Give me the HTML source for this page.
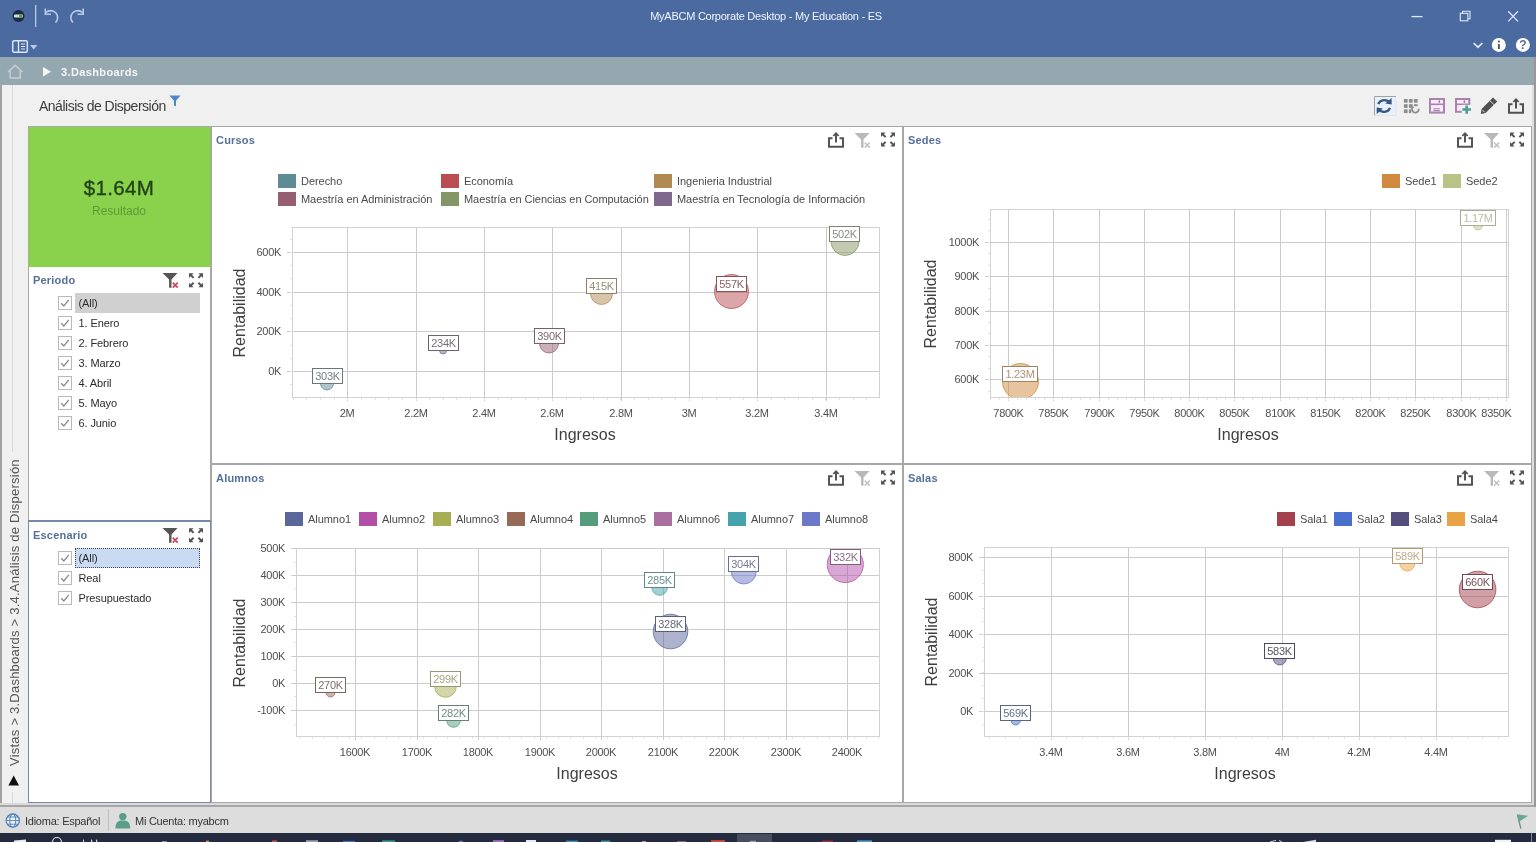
<!DOCTYPE html>
<html><head><meta charset="utf-8"><title>MyABCM Corporate Desktop - My Education - ES</title>
<style>
html,body{margin:0;padding:0;}
body{width:1536px;height:842px;overflow:hidden;background:#f0f0f0;font-family:"Liberation Sans",sans-serif;position:relative;}
.abs{position:absolute;}
#wrap{position:absolute;left:0;top:0;width:1536px;height:842px;will-change:transform;}
#titlebar{left:0;top:0;width:1536px;height:57px;background:#4b6a9f;}
#title{left:-2px;top:10px;width:1536px;text-align:center;color:#f2f5fa;font-size:11px;letter-spacing:-0.25px;}
#crumb{left:0;top:57px;width:1536px;height:28px;background:#96a8af;}
#crumbtxt{left:61px;top:66px;color:#f4f7f8;font-size:11px;font-weight:bold;letter-spacing:0.38px;}
#leftedge{left:0;top:85px;width:2px;height:721px;background:#a0a0a0;}
#leftstrip{left:2px;top:85px;width:25px;height:721px;background:#f0f0f0;}
#stripline{left:12px;top:85px;width:1px;height:721px;background:#d9d9d9;}
#heading{left:39px;top:98px;font-size:14px;color:#3c3c3c;letter-spacing:-0.5px;}
#sidetxt{left:7px;top:766px;font-size:13px;color:#555;transform-origin:0 0;transform:rotate(-90deg);white-space:nowrap;letter-spacing:0.23px;}
#green{left:28px;top:127px;width:182px;height:140px;background:#8ad24b;}
#val{left:28px;top:175.5px;width:182px;text-align:center;font-size:20.5px;color:#1f3f18;letter-spacing:0.35px;-webkit-text-stroke:0.35px #1f3f18;}
#res{left:28px;top:204px;width:182px;text-align:center;font-size:12px;color:#5f9a3a;}
.panel{background:#fff;}
.ptitle{font-size:11px;font-weight:bold;color:#54709b;letter-spacing:0.2px;}
.row{font-size:11px;color:#2b2b2b;letter-spacing:-0.1px;}
.cb{width:12px;height:12px;border:1px solid #b4b4b4;background:#fff;box-sizing:content-box;}
#status{left:0;top:807px;width:1536px;height:26px;background:#dddddd;}
#taskbar{left:0;top:833px;width:1536px;height:9px;background:#242b3f;}
.st{font-size:11px;color:#333;letter-spacing:-0.25px;}
svg text{font-family:"Liberation Sans",sans-serif;}
.ax{font-size:11px;fill:#4f4f4f;letter-spacing:-0.3px;}
.ttl{font-size:16px;fill:#3f3f3f;letter-spacing:0px;}
.lg{font-size:11px;fill:#4a4a4a;letter-spacing:-0.05px;}
.bl{font-size:11px;letter-spacing:-0.3px;}
</style></head><body>
<div id="wrap">

<div class="abs" id="titlebar"></div>
<div class="abs" id="title">MyABCM Corporate Desktop - My Education - ES</div>
<div class="abs" id="crumb"></div>
<div class="abs" id="crumbtxt">3.Dashboards</div>

<div class="abs" id="leftedge"></div>
<div class="abs" id="leftstrip"></div>
<div class="abs" id="stripline"></div>
<div class="abs" style="left:10px;top:452px;width:6px;height:340px;background:#f0f0f0;"></div>
<div class="abs" id="sidetxt">Vistas &gt; 3.Dashboards &gt; 3.4.Análisis de Dispersión</div>
<div class="abs" id="heading">Análisis de Dispersión</div>

<!-- panel frames -->
<div class="abs" style="left:28px;top:126px;width:1504px;height:677px;background:#a8a8a8;"></div>
<div class="abs" style="left:0;top:803px;width:1536px;height:2px;background:#dadada;"></div>
<div class="abs" style="left:0;top:805px;width:1536px;height:2px;background:#a6a6a6;"></div>
<div class="abs" style="left:1532px;top:85px;width:2px;height:720px;background:#dcdcdc;"></div>
<div class="abs" style="left:1534px;top:57px;width:2px;height:750px;background:#989898;"></div>
<div class="abs" id="green"></div>
<div class="abs" style="left:28px;top:127px;width:1px;height:140px;background:#9cba88;"></div>
<div class="abs" style="left:210px;top:127px;width:2px;height:140px;background:#9ab38c;"></div>
<div class="abs" id="val">$1.64M</div>
<div class="abs" id="res">Resultado</div>

<!-- Periodo -->
<div class="abs panel" style="left:29px;top:267px;width:181px;height:253px;"></div>
<div class="abs ptitle" style="left:33px;top:274px;">Periodo</div>
<div class="abs" style="left:75px;top:293px;width:125px;height:20px;background:#d0d0d0;"></div>

<!-- Escenario -->
<div class="abs" style="left:28px;top:520px;width:183px;height:283px;background:#748aa8;"></div>
<div class="abs panel" style="left:29px;top:522px;width:181px;height:280px;"></div>
<div class="abs ptitle" style="left:33px;top:529px;">Escenario</div>
<div class="abs" style="left:75px;top:548px;width:123px;height:18px;background:#c9daf3;border:1px dotted #445;"></div>

<!-- chart panels -->
<div class="abs panel" style="left:212px;top:127px;width:690px;height:336px;"></div>
<div class="abs panel" style="left:904px;top:127px;width:627px;height:336px;"></div>
<div class="abs panel" style="left:212px;top:465px;width:690px;height:337px;"></div>
<div class="abs panel" style="left:904px;top:465px;width:627px;height:337px;"></div>
<div class="abs ptitle" style="left:216px;top:134px;">Cursos</div>
<div class="abs ptitle" style="left:908px;top:134px;">Sedes</div>
<div class="abs ptitle" style="left:216px;top:472px;">Alumnos</div>
<div class="abs ptitle" style="left:908px;top:472px;">Salas</div>

<div class="abs" id="status"></div>
<div class="abs" id="taskbar"></div>
<svg class="abs" style="left:0;top:0;" width="1536" height="842" viewBox="0 0 1536 842">
<rect x="292.5" y="227.5" width="587" height="170" fill="#fff" stroke="#d2d2d2" stroke-width="1"/>
<rect x="347" y="227" width="1" height="174" fill="#cccccc"/>
<rect x="416" y="227" width="1" height="174" fill="#cccccc"/>
<rect x="484" y="227" width="1" height="174" fill="#cccccc"/>
<rect x="552" y="227" width="1" height="174" fill="#cccccc"/>
<rect x="621" y="227" width="1" height="174" fill="#cccccc"/>
<rect x="689" y="227" width="1" height="174" fill="#cccccc"/>
<rect x="757" y="227" width="1" height="174" fill="#cccccc"/>
<rect x="826" y="227" width="1" height="174" fill="#cccccc"/>
<rect x="287" y="252" width="592" height="1" fill="#cccccc"/>
<rect x="287" y="292" width="592" height="1" fill="#cccccc"/>
<rect x="287" y="331" width="592" height="1" fill="#cccccc"/>
<rect x="287" y="371" width="592" height="1" fill="#cccccc"/>
<rect x="293" y="398" width="1" height="2" fill="#e2e2e2"/>
<rect x="306" y="398" width="1" height="2" fill="#e2e2e2"/>
<rect x="320" y="398" width="1" height="2" fill="#e2e2e2"/>
<rect x="334" y="398" width="1" height="2" fill="#e2e2e2"/>
<rect x="347" y="398" width="1" height="2" fill="#e2e2e2"/>
<rect x="361" y="398" width="1" height="2" fill="#e2e2e2"/>
<rect x="375" y="398" width="1" height="2" fill="#e2e2e2"/>
<rect x="388" y="398" width="1" height="2" fill="#e2e2e2"/>
<rect x="402" y="398" width="1" height="2" fill="#e2e2e2"/>
<rect x="416" y="398" width="1" height="2" fill="#e2e2e2"/>
<rect x="429" y="398" width="1" height="2" fill="#e2e2e2"/>
<rect x="443" y="398" width="1" height="2" fill="#e2e2e2"/>
<rect x="456" y="398" width="1" height="2" fill="#e2e2e2"/>
<rect x="470" y="398" width="1" height="2" fill="#e2e2e2"/>
<rect x="484" y="398" width="1" height="2" fill="#e2e2e2"/>
<rect x="498" y="398" width="1" height="2" fill="#e2e2e2"/>
<rect x="511" y="398" width="1" height="2" fill="#e2e2e2"/>
<rect x="525" y="398" width="1" height="2" fill="#e2e2e2"/>
<rect x="538" y="398" width="1" height="2" fill="#e2e2e2"/>
<rect x="552" y="398" width="1" height="2" fill="#e2e2e2"/>
<rect x="566" y="398" width="1" height="2" fill="#e2e2e2"/>
<rect x="580" y="398" width="1" height="2" fill="#e2e2e2"/>
<rect x="593" y="398" width="1" height="2" fill="#e2e2e2"/>
<rect x="607" y="398" width="1" height="2" fill="#e2e2e2"/>
<rect x="620" y="398" width="1" height="2" fill="#e2e2e2"/>
<rect x="634" y="398" width="1" height="2" fill="#e2e2e2"/>
<rect x="648" y="398" width="1" height="2" fill="#e2e2e2"/>
<rect x="661" y="398" width="1" height="2" fill="#e2e2e2"/>
<rect x="675" y="398" width="1" height="2" fill="#e2e2e2"/>
<rect x="689" y="398" width="1" height="2" fill="#e2e2e2"/>
<rect x="702" y="398" width="1" height="2" fill="#e2e2e2"/>
<rect x="716" y="398" width="1" height="2" fill="#e2e2e2"/>
<rect x="730" y="398" width="1" height="2" fill="#e2e2e2"/>
<rect x="743" y="398" width="1" height="2" fill="#e2e2e2"/>
<rect x="757" y="398" width="1" height="2" fill="#e2e2e2"/>
<rect x="771" y="398" width="1" height="2" fill="#e2e2e2"/>
<rect x="784" y="398" width="1" height="2" fill="#e2e2e2"/>
<rect x="798" y="398" width="1" height="2" fill="#e2e2e2"/>
<rect x="812" y="398" width="1" height="2" fill="#e2e2e2"/>
<rect x="825" y="398" width="1" height="2" fill="#e2e2e2"/>
<rect x="839" y="398" width="1" height="2" fill="#e2e2e2"/>
<rect x="853" y="398" width="1" height="2" fill="#e2e2e2"/>
<rect x="866" y="398" width="1" height="2" fill="#e2e2e2"/>
<rect x="290" y="239" width="2" height="1" fill="#e2e2e2"/>
<rect x="290" y="252" width="2" height="1" fill="#e2e2e2"/>
<rect x="290" y="265" width="2" height="1" fill="#e2e2e2"/>
<rect x="290" y="278" width="2" height="1" fill="#e2e2e2"/>
<rect x="290" y="292" width="2" height="1" fill="#e2e2e2"/>
<rect x="290" y="305" width="2" height="1" fill="#e2e2e2"/>
<rect x="290" y="318" width="2" height="1" fill="#e2e2e2"/>
<rect x="290" y="331" width="2" height="1" fill="#e2e2e2"/>
<rect x="290" y="345" width="2" height="1" fill="#e2e2e2"/>
<rect x="290" y="358" width="2" height="1" fill="#e2e2e2"/>
<rect x="290" y="371" width="2" height="1" fill="#e2e2e2"/>
<rect x="290" y="384" width="2" height="1" fill="#e2e2e2"/>
<text x="347" y="417" text-anchor="middle" class="ax">2M</text>
<text x="416" y="417" text-anchor="middle" class="ax">2.2M</text>
<text x="484" y="417" text-anchor="middle" class="ax">2.4M</text>
<text x="552" y="417" text-anchor="middle" class="ax">2.6M</text>
<text x="621" y="417" text-anchor="middle" class="ax">2.8M</text>
<text x="689" y="417" text-anchor="middle" class="ax">3M</text>
<text x="757" y="417" text-anchor="middle" class="ax">3.2M</text>
<text x="826" y="417" text-anchor="middle" class="ax">3.4M</text>
<text x="281" y="256" text-anchor="end" class="ax">600K</text>
<text x="281" y="296" text-anchor="end" class="ax">400K</text>
<text x="281" y="335" text-anchor="end" class="ax">200K</text>
<text x="281" y="375" text-anchor="end" class="ax">0K</text>
<text transform="translate(245,313) rotate(-90)" text-anchor="middle" class="ttl">Rentabilidad</text>
<text x="585" y="440" text-anchor="middle" class="ttl">Ingresos</text>
<rect x="278" y="174" width="18" height="14" fill="#5f8b95"/>
<text x="301" y="185" class="lg">Derecho</text>
<rect x="441" y="174" width="18" height="14" fill="#ba4d51"/>
<text x="464" y="185" class="lg">Economía</text>
<rect x="654" y="174" width="18" height="14" fill="#af8a53"/>
<text x="677" y="185" class="lg">Ingenieria Industrial</text>
<rect x="278" y="192" width="18" height="14" fill="#955f71"/>
<text x="301" y="203" class="lg">Maestría en Administración</text>
<rect x="441" y="192" width="18" height="14" fill="#859666"/>
<text x="464" y="203" class="lg">Maestría en Ciencias en Computación</text>
<rect x="654" y="192" width="18" height="14" fill="#7e688c"/>
<text x="677" y="203" class="lg">Maestría en Tecnología de Información</text>
<clipPath id="c292"><rect x="293" y="228" width="586" height="169"/></clipPath>
<circle cx="327" cy="383.5" r="6.5" fill="#5f8b95" fill-opacity="0.5" stroke="#5f8b95" stroke-opacity="0.75" stroke-width="1" clip-path="url(#c292)"/>
<circle cx="443" cy="350.5" r="3.5" fill="#7e688c" fill-opacity="0.5" stroke="#7e688c" stroke-opacity="0.75" stroke-width="1" clip-path="url(#c292)"/>
<circle cx="549" cy="343.5" r="9.5" fill="#955f71" fill-opacity="0.5" stroke="#955f71" stroke-opacity="0.75" stroke-width="1" clip-path="url(#c292)"/>
<circle cx="601.5" cy="293.5" r="11.0" fill="#af8a53" fill-opacity="0.5" stroke="#af8a53" stroke-opacity="0.75" stroke-width="1" clip-path="url(#c292)"/>
<circle cx="731.5" cy="291.5" r="17.0" fill="#ba4d51" fill-opacity="0.5" stroke="#ba4d51" stroke-opacity="0.75" stroke-width="1" clip-path="url(#c292)"/>
<circle cx="845" cy="241.5" r="14.0" fill="#859666" fill-opacity="0.5" stroke="#859666" stroke-opacity="0.75" stroke-width="1" clip-path="url(#c292)"/>
<rect x="312.5" y="368.5" width="30" height="15" fill="#fff" stroke="#67787c" stroke-width="1"/>
<text x="327.5" y="380" text-anchor="middle" class="bl" fill="#748387">303K</text>
<rect x="428.5" y="335.5" width="30" height="15" fill="#fff" stroke="#6d6472" stroke-width="1"/>
<text x="443.5" y="347" text-anchor="middle" class="bl" fill="#776f7b">234K</text>
<rect x="534.5" y="328.5" width="30" height="15" fill="#fff" stroke="#756067" stroke-width="1"/>
<text x="549.5" y="340" text-anchor="middle" class="bl" fill="#7e6b71">390K</text>
<rect x="586.5" y="278.5" width="30" height="15" fill="#fff" stroke="#8f806a" stroke-width="1"/>
<text x="601.5" y="290" text-anchor="middle" class="bl" fill="#9a8d7a">415K</text>
<rect x="716.5" y="276.5" width="30" height="15" fill="#fff" stroke="#835759" stroke-width="1"/>
<text x="731.5" y="288" text-anchor="middle" class="bl" fill="#896364">557K</text>
<rect x="829.5" y="226.5" width="30" height="15" fill="#fff" stroke="#7c8370" stroke-width="1"/>
<text x="844.5" y="238" text-anchor="middle" class="bl" fill="#898f7e">502K</text>
<rect x="990.5" y="209.5" width="518" height="188" fill="#fff" stroke="#d2d2d2" stroke-width="1"/>
<rect x="1008" y="209" width="1" height="192" fill="#cccccc"/>
<rect x="1053" y="209" width="1" height="192" fill="#cccccc"/>
<rect x="1099" y="209" width="1" height="192" fill="#cccccc"/>
<rect x="1144" y="209" width="1" height="192" fill="#cccccc"/>
<rect x="1189" y="209" width="1" height="192" fill="#cccccc"/>
<rect x="1234" y="209" width="1" height="192" fill="#cccccc"/>
<rect x="1280" y="209" width="1" height="192" fill="#cccccc"/>
<rect x="1325" y="209" width="1" height="192" fill="#cccccc"/>
<rect x="1370" y="209" width="1" height="192" fill="#cccccc"/>
<rect x="1415" y="209" width="1" height="192" fill="#cccccc"/>
<rect x="1461" y="209" width="1" height="192" fill="#cccccc"/>
<rect x="1506" y="209" width="1" height="192" fill="#cccccc"/>
<rect x="985" y="242" width="523" height="1" fill="#cccccc"/>
<rect x="985" y="276" width="523" height="1" fill="#cccccc"/>
<rect x="985" y="311" width="523" height="1" fill="#cccccc"/>
<rect x="985" y="345" width="523" height="1" fill="#cccccc"/>
<rect x="985" y="379" width="523" height="1" fill="#cccccc"/>
<rect x="990" y="398" width="1" height="2" fill="#e2e2e2"/>
<rect x="999" y="398" width="1" height="2" fill="#e2e2e2"/>
<rect x="1008" y="398" width="1" height="2" fill="#e2e2e2"/>
<rect x="1017" y="398" width="1" height="2" fill="#e2e2e2"/>
<rect x="1026" y="398" width="1" height="2" fill="#e2e2e2"/>
<rect x="1035" y="398" width="1" height="2" fill="#e2e2e2"/>
<rect x="1044" y="398" width="1" height="2" fill="#e2e2e2"/>
<rect x="1053" y="398" width="1" height="2" fill="#e2e2e2"/>
<rect x="1062" y="398" width="1" height="2" fill="#e2e2e2"/>
<rect x="1071" y="398" width="1" height="2" fill="#e2e2e2"/>
<rect x="1080" y="398" width="1" height="2" fill="#e2e2e2"/>
<rect x="1090" y="398" width="1" height="2" fill="#e2e2e2"/>
<rect x="1099" y="398" width="1" height="2" fill="#e2e2e2"/>
<rect x="1108" y="398" width="1" height="2" fill="#e2e2e2"/>
<rect x="1117" y="398" width="1" height="2" fill="#e2e2e2"/>
<rect x="1126" y="398" width="1" height="2" fill="#e2e2e2"/>
<rect x="1135" y="398" width="1" height="2" fill="#e2e2e2"/>
<rect x="1144" y="398" width="1" height="2" fill="#e2e2e2"/>
<rect x="1153" y="398" width="1" height="2" fill="#e2e2e2"/>
<rect x="1162" y="398" width="1" height="2" fill="#e2e2e2"/>
<rect x="1171" y="398" width="1" height="2" fill="#e2e2e2"/>
<rect x="1180" y="398" width="1" height="2" fill="#e2e2e2"/>
<rect x="1189" y="398" width="1" height="2" fill="#e2e2e2"/>
<rect x="1198" y="398" width="1" height="2" fill="#e2e2e2"/>
<rect x="1207" y="398" width="1" height="2" fill="#e2e2e2"/>
<rect x="1216" y="398" width="1" height="2" fill="#e2e2e2"/>
<rect x="1225" y="398" width="1" height="2" fill="#e2e2e2"/>
<rect x="1234" y="398" width="1" height="2" fill="#e2e2e2"/>
<rect x="1243" y="398" width="1" height="2" fill="#e2e2e2"/>
<rect x="1252" y="398" width="1" height="2" fill="#e2e2e2"/>
<rect x="1262" y="398" width="1" height="2" fill="#e2e2e2"/>
<rect x="1270" y="398" width="1" height="2" fill="#e2e2e2"/>
<rect x="1280" y="398" width="1" height="2" fill="#e2e2e2"/>
<rect x="1289" y="398" width="1" height="2" fill="#e2e2e2"/>
<rect x="1298" y="398" width="1" height="2" fill="#e2e2e2"/>
<rect x="1307" y="398" width="1" height="2" fill="#e2e2e2"/>
<rect x="1316" y="398" width="1" height="2" fill="#e2e2e2"/>
<rect x="1325" y="398" width="1" height="2" fill="#e2e2e2"/>
<rect x="1334" y="398" width="1" height="2" fill="#e2e2e2"/>
<rect x="1343" y="398" width="1" height="2" fill="#e2e2e2"/>
<rect x="1352" y="398" width="1" height="2" fill="#e2e2e2"/>
<rect x="1361" y="398" width="1" height="2" fill="#e2e2e2"/>
<rect x="1370" y="398" width="1" height="2" fill="#e2e2e2"/>
<rect x="1379" y="398" width="1" height="2" fill="#e2e2e2"/>
<rect x="1388" y="398" width="1" height="2" fill="#e2e2e2"/>
<rect x="1397" y="398" width="1" height="2" fill="#e2e2e2"/>
<rect x="1406" y="398" width="1" height="2" fill="#e2e2e2"/>
<rect x="1415" y="398" width="1" height="2" fill="#e2e2e2"/>
<rect x="1424" y="398" width="1" height="2" fill="#e2e2e2"/>
<rect x="1433" y="398" width="1" height="2" fill="#e2e2e2"/>
<rect x="1442" y="398" width="1" height="2" fill="#e2e2e2"/>
<rect x="1452" y="398" width="1" height="2" fill="#e2e2e2"/>
<rect x="1461" y="398" width="1" height="2" fill="#e2e2e2"/>
<rect x="1470" y="398" width="1" height="2" fill="#e2e2e2"/>
<rect x="1479" y="398" width="1" height="2" fill="#e2e2e2"/>
<rect x="1488" y="398" width="1" height="2" fill="#e2e2e2"/>
<rect x="1497" y="398" width="1" height="2" fill="#e2e2e2"/>
<rect x="1506" y="398" width="1" height="2" fill="#e2e2e2"/>
<rect x="988" y="219" width="2" height="1" fill="#e2e2e2"/>
<rect x="988" y="230" width="2" height="1" fill="#e2e2e2"/>
<rect x="988" y="242" width="2" height="1" fill="#e2e2e2"/>
<rect x="988" y="253" width="2" height="1" fill="#e2e2e2"/>
<rect x="988" y="265" width="2" height="1" fill="#e2e2e2"/>
<rect x="988" y="276" width="2" height="1" fill="#e2e2e2"/>
<rect x="988" y="288" width="2" height="1" fill="#e2e2e2"/>
<rect x="988" y="299" width="2" height="1" fill="#e2e2e2"/>
<rect x="988" y="310" width="2" height="1" fill="#e2e2e2"/>
<rect x="988" y="322" width="2" height="1" fill="#e2e2e2"/>
<rect x="988" y="333" width="2" height="1" fill="#e2e2e2"/>
<rect x="988" y="345" width="2" height="1" fill="#e2e2e2"/>
<rect x="988" y="356" width="2" height="1" fill="#e2e2e2"/>
<rect x="988" y="368" width="2" height="1" fill="#e2e2e2"/>
<rect x="988" y="379" width="2" height="1" fill="#e2e2e2"/>
<rect x="988" y="391" width="2" height="1" fill="#e2e2e2"/>
<text x="1008.5" y="417" text-anchor="middle" class="ax">7800K</text>
<text x="1053.5" y="417" text-anchor="middle" class="ax">7850K</text>
<text x="1099.5" y="417" text-anchor="middle" class="ax">7900K</text>
<text x="1144.5" y="417" text-anchor="middle" class="ax">7950K</text>
<text x="1189.5" y="417" text-anchor="middle" class="ax">8000K</text>
<text x="1234.5" y="417" text-anchor="middle" class="ax">8050K</text>
<text x="1280.5" y="417" text-anchor="middle" class="ax">8100K</text>
<text x="1325.5" y="417" text-anchor="middle" class="ax">8150K</text>
<text x="1370.5" y="417" text-anchor="middle" class="ax">8200K</text>
<text x="1415.5" y="417" text-anchor="middle" class="ax">8250K</text>
<text x="1461.5" y="417" text-anchor="middle" class="ax">8300K</text>
<text x="1496.5" y="417" text-anchor="middle" class="ax">8350K</text>
<text x="979" y="246" text-anchor="end" class="ax">1000K</text>
<text x="979" y="280" text-anchor="end" class="ax">900K</text>
<text x="979" y="315" text-anchor="end" class="ax">800K</text>
<text x="979" y="349" text-anchor="end" class="ax">700K</text>
<text x="979" y="383" text-anchor="end" class="ax">600K</text>
<text transform="translate(936,304) rotate(-90)" text-anchor="middle" class="ttl">Rentabilidad</text>
<text x="1248" y="440" text-anchor="middle" class="ttl">Ingresos</text>
<rect x="1382" y="174" width="18" height="14" fill="#d08a3e"/>
<text x="1405" y="185" class="lg">Sede1</text>
<rect x="1443" y="174" width="18" height="14" fill="#b8c385"/>
<text x="1466" y="185" class="lg">Sede2</text>
<clipPath id="c990"><rect x="991" y="210" width="517" height="187"/></clipPath>
<circle cx="1020.5" cy="381.5" r="18.0" fill="#d08a3e" fill-opacity="0.5" stroke="#d08a3e" stroke-opacity="0.75" stroke-width="1" clip-path="url(#c990)"/>
<circle cx="1478" cy="225.5" r="4.5" fill="#b8c385" fill-opacity="0.5" stroke="#b8c385" stroke-opacity="0.75" stroke-width="1" clip-path="url(#c990)"/>
<rect x="1002.5" y="366.5" width="35" height="15" fill="#fff" stroke="#a08466" stroke-width="1"/>
<text x="1020.0" y="378" text-anchor="middle" class="bl" fill="#ab9278">1.23M</text>
<rect x="1460.5" y="210.5" width="35" height="15" fill="#fff" stroke="#a8ac93" stroke-width="1"/>
<text x="1478.0" y="222" text-anchor="middle" class="bl" fill="#b9bca7">1.17M</text>
<rect x="296.5" y="548.5" width="583" height="188" fill="#fff" stroke="#d2d2d2" stroke-width="1"/>
<rect x="355" y="548" width="1" height="192" fill="#cccccc"/>
<rect x="417" y="548" width="1" height="192" fill="#cccccc"/>
<rect x="478" y="548" width="1" height="192" fill="#cccccc"/>
<rect x="540" y="548" width="1" height="192" fill="#cccccc"/>
<rect x="601" y="548" width="1" height="192" fill="#cccccc"/>
<rect x="663" y="548" width="1" height="192" fill="#cccccc"/>
<rect x="724" y="548" width="1" height="192" fill="#cccccc"/>
<rect x="786" y="548" width="1" height="192" fill="#cccccc"/>
<rect x="847" y="548" width="1" height="192" fill="#cccccc"/>
<rect x="291" y="548" width="588" height="1" fill="#cccccc"/>
<rect x="291" y="575" width="588" height="1" fill="#cccccc"/>
<rect x="291" y="602" width="588" height="1" fill="#cccccc"/>
<rect x="291" y="629" width="588" height="1" fill="#cccccc"/>
<rect x="291" y="656" width="588" height="1" fill="#cccccc"/>
<rect x="291" y="683" width="588" height="1" fill="#cccccc"/>
<rect x="291" y="710" width="588" height="1" fill="#cccccc"/>
<rect x="300" y="737" width="1" height="2" fill="#e2e2e2"/>
<rect x="312" y="737" width="1" height="2" fill="#e2e2e2"/>
<rect x="324" y="737" width="1" height="2" fill="#e2e2e2"/>
<rect x="337" y="737" width="1" height="2" fill="#e2e2e2"/>
<rect x="349" y="737" width="1" height="2" fill="#e2e2e2"/>
<rect x="361" y="737" width="1" height="2" fill="#e2e2e2"/>
<rect x="374" y="737" width="1" height="2" fill="#e2e2e2"/>
<rect x="386" y="737" width="1" height="2" fill="#e2e2e2"/>
<rect x="398" y="737" width="1" height="2" fill="#e2e2e2"/>
<rect x="410" y="737" width="1" height="2" fill="#e2e2e2"/>
<rect x="423" y="737" width="1" height="2" fill="#e2e2e2"/>
<rect x="435" y="737" width="1" height="2" fill="#e2e2e2"/>
<rect x="447" y="737" width="1" height="2" fill="#e2e2e2"/>
<rect x="460" y="737" width="1" height="2" fill="#e2e2e2"/>
<rect x="472" y="737" width="1" height="2" fill="#e2e2e2"/>
<rect x="484" y="737" width="1" height="2" fill="#e2e2e2"/>
<rect x="497" y="737" width="1" height="2" fill="#e2e2e2"/>
<rect x="509" y="737" width="1" height="2" fill="#e2e2e2"/>
<rect x="521" y="737" width="1" height="2" fill="#e2e2e2"/>
<rect x="534" y="737" width="1" height="2" fill="#e2e2e2"/>
<rect x="546" y="737" width="1" height="2" fill="#e2e2e2"/>
<rect x="558" y="737" width="1" height="2" fill="#e2e2e2"/>
<rect x="570" y="737" width="1" height="2" fill="#e2e2e2"/>
<rect x="583" y="737" width="1" height="2" fill="#e2e2e2"/>
<rect x="595" y="737" width="1" height="2" fill="#e2e2e2"/>
<rect x="607" y="737" width="1" height="2" fill="#e2e2e2"/>
<rect x="620" y="737" width="1" height="2" fill="#e2e2e2"/>
<rect x="632" y="737" width="1" height="2" fill="#e2e2e2"/>
<rect x="644" y="737" width="1" height="2" fill="#e2e2e2"/>
<rect x="657" y="737" width="1" height="2" fill="#e2e2e2"/>
<rect x="669" y="737" width="1" height="2" fill="#e2e2e2"/>
<rect x="681" y="737" width="1" height="2" fill="#e2e2e2"/>
<rect x="694" y="737" width="1" height="2" fill="#e2e2e2"/>
<rect x="706" y="737" width="1" height="2" fill="#e2e2e2"/>
<rect x="718" y="737" width="1" height="2" fill="#e2e2e2"/>
<rect x="730" y="737" width="1" height="2" fill="#e2e2e2"/>
<rect x="743" y="737" width="1" height="2" fill="#e2e2e2"/>
<rect x="755" y="737" width="1" height="2" fill="#e2e2e2"/>
<rect x="768" y="737" width="1" height="2" fill="#e2e2e2"/>
<rect x="780" y="737" width="1" height="2" fill="#e2e2e2"/>
<rect x="792" y="737" width="1" height="2" fill="#e2e2e2"/>
<rect x="804" y="737" width="1" height="2" fill="#e2e2e2"/>
<rect x="817" y="737" width="1" height="2" fill="#e2e2e2"/>
<rect x="829" y="737" width="1" height="2" fill="#e2e2e2"/>
<rect x="841" y="737" width="1" height="2" fill="#e2e2e2"/>
<rect x="854" y="737" width="1" height="2" fill="#e2e2e2"/>
<rect x="866" y="737" width="1" height="2" fill="#e2e2e2"/>
<rect x="878" y="737" width="1" height="2" fill="#e2e2e2"/>
<rect x="294" y="562" width="2" height="1" fill="#e2e2e2"/>
<rect x="294" y="588" width="2" height="1" fill="#e2e2e2"/>
<rect x="294" y="616" width="2" height="1" fill="#e2e2e2"/>
<rect x="294" y="642" width="2" height="1" fill="#e2e2e2"/>
<rect x="294" y="670" width="2" height="1" fill="#e2e2e2"/>
<rect x="294" y="696" width="2" height="1" fill="#e2e2e2"/>
<rect x="294" y="724" width="2" height="1" fill="#e2e2e2"/>
<text x="355" y="756" text-anchor="middle" class="ax">1600K</text>
<text x="417" y="756" text-anchor="middle" class="ax">1700K</text>
<text x="478" y="756" text-anchor="middle" class="ax">1800K</text>
<text x="540" y="756" text-anchor="middle" class="ax">1900K</text>
<text x="601" y="756" text-anchor="middle" class="ax">2000K</text>
<text x="663" y="756" text-anchor="middle" class="ax">2100K</text>
<text x="724" y="756" text-anchor="middle" class="ax">2200K</text>
<text x="786" y="756" text-anchor="middle" class="ax">2300K</text>
<text x="847" y="756" text-anchor="middle" class="ax">2400K</text>
<text x="285" y="552" text-anchor="end" class="ax">500K</text>
<text x="285" y="579" text-anchor="end" class="ax">400K</text>
<text x="285" y="606" text-anchor="end" class="ax">300K</text>
<text x="285" y="633" text-anchor="end" class="ax">200K</text>
<text x="285" y="660" text-anchor="end" class="ax">100K</text>
<text x="285" y="687" text-anchor="end" class="ax">0K</text>
<text x="285" y="714" text-anchor="end" class="ax">-100K</text>
<text transform="translate(245,643) rotate(-90)" text-anchor="middle" class="ttl">Rentabilidad</text>
<text x="587" y="779" text-anchor="middle" class="ttl">Ingresos</text>
<rect x="285" y="512" width="18" height="14" fill="#5b6799"/>
<text x="308" y="523" class="lg">Alumno1</text>
<rect x="359" y="512" width="18" height="14" fill="#b44fa8"/>
<text x="382" y="523" class="lg">Alumno2</text>
<rect x="433" y="512" width="18" height="14" fill="#a8ae52"/>
<text x="456" y="523" class="lg">Alumno3</text>
<rect x="507" y="512" width="18" height="14" fill="#976a58"/>
<text x="530" y="523" class="lg">Alumno4</text>
<rect x="580" y="512" width="18" height="14" fill="#559c7c"/>
<text x="603" y="523" class="lg">Alumno5</text>
<rect x="654" y="512" width="18" height="14" fill="#aa6f9f"/>
<text x="677" y="523" class="lg">Alumno6</text>
<rect x="728" y="512" width="18" height="14" fill="#44a3ac"/>
<text x="751" y="523" class="lg">Alumno7</text>
<rect x="802" y="512" width="18" height="14" fill="#6c78c8"/>
<text x="825" y="523" class="lg">Alumno8</text>
<clipPath id="c296"><rect x="297" y="549" width="582" height="187"/></clipPath>
<circle cx="330.5" cy="692.5" r="4.5" fill="#976a58" fill-opacity="0.5" stroke="#976a58" stroke-opacity="0.75" stroke-width="1" clip-path="url(#c296)"/>
<circle cx="445.5" cy="686.5" r="10.8" fill="#a8ae52" fill-opacity="0.5" stroke="#a8ae52" stroke-opacity="0.75" stroke-width="1" clip-path="url(#c296)"/>
<circle cx="453.5" cy="720.5" r="6.8" fill="#559c7c" fill-opacity="0.5" stroke="#559c7c" stroke-opacity="0.75" stroke-width="1" clip-path="url(#c296)"/>
<circle cx="659.6" cy="587.5" r="7.800000000000001" fill="#44a3ac" fill-opacity="0.5" stroke="#44a3ac" stroke-opacity="0.75" stroke-width="1" clip-path="url(#c296)"/>
<circle cx="670.5" cy="631.5" r="17.3" fill="#5b6799" fill-opacity="0.5" stroke="#5b6799" stroke-opacity="0.75" stroke-width="1" clip-path="url(#c296)"/>
<circle cx="743.8" cy="571.5" r="12.5" fill="#6c78c8" fill-opacity="0.5" stroke="#6c78c8" stroke-opacity="0.75" stroke-width="1" clip-path="url(#c296)"/>
<circle cx="845.3" cy="564.5" r="18.1" fill="#b44fa8" fill-opacity="0.5" stroke="#b44fa8" stroke-opacity="0.75" stroke-width="1" clip-path="url(#c296)"/>
<rect x="315.5" y="677.5" width="30" height="15" fill="#fff" stroke="#78665f" stroke-width="1"/>
<text x="330.5" y="689" text-anchor="middle" class="bl" fill="#81716b">270K</text>
<rect x="430.5" y="671.5" width="30" height="15" fill="#fff" stroke="#969873" stroke-width="1"/>
<text x="445.5" y="683" text-anchor="middle" class="bl" fill="#a4a686">299K</text>
<rect x="438.5" y="705.5" width="30" height="15" fill="#fff" stroke="#658175" stroke-width="1"/>
<text x="453.5" y="717" text-anchor="middle" class="bl" fill="#738c81">282K</text>
<rect x="644.5" y="572.5" width="30" height="15" fill="#fff" stroke="#60868a" stroke-width="1"/>
<text x="659.5" y="584" text-anchor="middle" class="bl" fill="#709194">285K</text>
<rect x="655.5" y="616.5" width="30" height="15" fill="#fff" stroke="#5a5f73" stroke-width="1"/>
<text x="670.5" y="628" text-anchor="middle" class="bl" fill="#64687a">328K</text>
<rect x="728.5" y="556.5" width="30" height="15" fill="#fff" stroke="#6b7090" stroke-width="1"/>
<text x="743.5" y="568" text-anchor="middle" class="bl" fill="#777b97">304K</text>
<rect x="830.5" y="549.5" width="30" height="15" fill="#fff" stroke="#855c80" stroke-width="1"/>
<text x="845.5" y="561" text-anchor="middle" class="bl" fill="#8c6988">332K</text>
<rect x="984.5" y="547.5" width="524" height="189" fill="#fff" stroke="#d2d2d2" stroke-width="1"/>
<rect x="1051" y="547" width="1" height="193" fill="#cccccc"/>
<rect x="1128" y="547" width="1" height="193" fill="#cccccc"/>
<rect x="1205" y="547" width="1" height="193" fill="#cccccc"/>
<rect x="1282" y="547" width="1" height="193" fill="#cccccc"/>
<rect x="1359" y="547" width="1" height="193" fill="#cccccc"/>
<rect x="1436" y="547" width="1" height="193" fill="#cccccc"/>
<rect x="979" y="557" width="529" height="1" fill="#cccccc"/>
<rect x="979" y="596" width="529" height="1" fill="#cccccc"/>
<rect x="979" y="634" width="529" height="1" fill="#cccccc"/>
<rect x="979" y="673" width="529" height="1" fill="#cccccc"/>
<rect x="979" y="711" width="529" height="1" fill="#cccccc"/>
<rect x="989" y="737" width="1" height="2" fill="#e2e2e2"/>
<rect x="1005" y="737" width="1" height="2" fill="#e2e2e2"/>
<rect x="1020" y="737" width="1" height="2" fill="#e2e2e2"/>
<rect x="1036" y="737" width="1" height="2" fill="#e2e2e2"/>
<rect x="1051" y="737" width="1" height="2" fill="#e2e2e2"/>
<rect x="1066" y="737" width="1" height="2" fill="#e2e2e2"/>
<rect x="1082" y="737" width="1" height="2" fill="#e2e2e2"/>
<rect x="1097" y="737" width="1" height="2" fill="#e2e2e2"/>
<rect x="1113" y="737" width="1" height="2" fill="#e2e2e2"/>
<rect x="1128" y="737" width="1" height="2" fill="#e2e2e2"/>
<rect x="1143" y="737" width="1" height="2" fill="#e2e2e2"/>
<rect x="1159" y="737" width="1" height="2" fill="#e2e2e2"/>
<rect x="1174" y="737" width="1" height="2" fill="#e2e2e2"/>
<rect x="1190" y="737" width="1" height="2" fill="#e2e2e2"/>
<rect x="1205" y="737" width="1" height="2" fill="#e2e2e2"/>
<rect x="1220" y="737" width="1" height="2" fill="#e2e2e2"/>
<rect x="1236" y="737" width="1" height="2" fill="#e2e2e2"/>
<rect x="1251" y="737" width="1" height="2" fill="#e2e2e2"/>
<rect x="1267" y="737" width="1" height="2" fill="#e2e2e2"/>
<rect x="1282" y="737" width="1" height="2" fill="#e2e2e2"/>
<rect x="1297" y="737" width="1" height="2" fill="#e2e2e2"/>
<rect x="1313" y="737" width="1" height="2" fill="#e2e2e2"/>
<rect x="1328" y="737" width="1" height="2" fill="#e2e2e2"/>
<rect x="1344" y="737" width="1" height="2" fill="#e2e2e2"/>
<rect x="1359" y="737" width="1" height="2" fill="#e2e2e2"/>
<rect x="1374" y="737" width="1" height="2" fill="#e2e2e2"/>
<rect x="1390" y="737" width="1" height="2" fill="#e2e2e2"/>
<rect x="1405" y="737" width="1" height="2" fill="#e2e2e2"/>
<rect x="1421" y="737" width="1" height="2" fill="#e2e2e2"/>
<rect x="1436" y="737" width="1" height="2" fill="#e2e2e2"/>
<rect x="1451" y="737" width="1" height="2" fill="#e2e2e2"/>
<rect x="1467" y="737" width="1" height="2" fill="#e2e2e2"/>
<rect x="1482" y="737" width="1" height="2" fill="#e2e2e2"/>
<rect x="1498" y="737" width="1" height="2" fill="#e2e2e2"/>
<rect x="982" y="570" width="2" height="1" fill="#e2e2e2"/>
<rect x="982" y="583" width="2" height="1" fill="#e2e2e2"/>
<rect x="982" y="596" width="2" height="1" fill="#e2e2e2"/>
<rect x="982" y="608" width="2" height="1" fill="#e2e2e2"/>
<rect x="982" y="621" width="2" height="1" fill="#e2e2e2"/>
<rect x="982" y="634" width="2" height="1" fill="#e2e2e2"/>
<rect x="982" y="647" width="2" height="1" fill="#e2e2e2"/>
<rect x="982" y="660" width="2" height="1" fill="#e2e2e2"/>
<rect x="982" y="672" width="2" height="1" fill="#e2e2e2"/>
<rect x="982" y="685" width="2" height="1" fill="#e2e2e2"/>
<rect x="982" y="698" width="2" height="1" fill="#e2e2e2"/>
<rect x="982" y="711" width="2" height="1" fill="#e2e2e2"/>
<rect x="982" y="724" width="2" height="1" fill="#e2e2e2"/>
<text x="1051" y="756" text-anchor="middle" class="ax">3.4M</text>
<text x="1128" y="756" text-anchor="middle" class="ax">3.6M</text>
<text x="1205" y="756" text-anchor="middle" class="ax">3.8M</text>
<text x="1282" y="756" text-anchor="middle" class="ax">4M</text>
<text x="1359" y="756" text-anchor="middle" class="ax">4.2M</text>
<text x="1436" y="756" text-anchor="middle" class="ax">4.4M</text>
<text x="973" y="561" text-anchor="end" class="ax">800K</text>
<text x="973" y="600" text-anchor="end" class="ax">600K</text>
<text x="973" y="638" text-anchor="end" class="ax">400K</text>
<text x="973" y="677" text-anchor="end" class="ax">200K</text>
<text x="973" y="715" text-anchor="end" class="ax">0K</text>
<text transform="translate(937,642) rotate(-90)" text-anchor="middle" class="ttl">Rentabilidad</text>
<text x="1245" y="779" text-anchor="middle" class="ttl">Ingresos</text>
<rect x="1277" y="512" width="18" height="14" fill="#a3414f"/>
<text x="1300" y="523" class="lg">Sala1</text>
<rect x="1334" y="512" width="18" height="14" fill="#4a6fcc"/>
<text x="1357" y="523" class="lg">Sala2</text>
<rect x="1391" y="512" width="18" height="14" fill="#524f7c"/>
<text x="1414" y="523" class="lg">Sala3</text>
<rect x="1447" y="512" width="18" height="14" fill="#e8a444"/>
<text x="1470" y="523" class="lg">Sala4</text>
<clipPath id="c984"><rect x="985" y="548" width="523" height="188"/></clipPath>
<circle cx="1015.8" cy="720.5" r="4.5" fill="#4a6fcc" fill-opacity="0.5" stroke="#4a6fcc" stroke-opacity="0.75" stroke-width="1" clip-path="url(#c984)"/>
<circle cx="1279.8" cy="658.5" r="6.5" fill="#524f7c" fill-opacity="0.5" stroke="#524f7c" stroke-opacity="0.75" stroke-width="1" clip-path="url(#c984)"/>
<circle cx="1407.3" cy="563.5" r="7.5" fill="#e8a444" fill-opacity="0.5" stroke="#e8a444" stroke-opacity="0.75" stroke-width="1" clip-path="url(#c984)"/>
<circle cx="1477.6" cy="589.5" r="18.3" fill="#a3414f" fill-opacity="0.5" stroke="#a3414f" stroke-opacity="0.75" stroke-width="1" clip-path="url(#c984)"/>
<rect x="1000.5" y="705.5" width="30" height="15" fill="#fff" stroke="#56658a" stroke-width="1"/>
<text x="1015.5" y="717" text-anchor="middle" class="bl" fill="#616e8f">569K</text>
<rect x="1264.5" y="643.5" width="30" height="15" fill="#fff" stroke="#4c4b5d" stroke-width="1"/>
<text x="1279.5" y="655" text-anchor="middle" class="bl" fill="#545363">583K</text>
<rect x="1392.5" y="548.5" width="30" height="15" fill="#fff" stroke="#b59a74" stroke-width="1"/>
<text x="1407.5" y="560" text-anchor="middle" class="bl" fill="#c2aa89">589K</text>
<rect x="1462.5" y="574.5" width="30" height="15" fill="#fff" stroke="#724b51" stroke-width="1"/>
<text x="1477.5" y="586" text-anchor="middle" class="bl" fill="#77555a">660K</text>
<g fill="none" stroke="#555" stroke-width="2" stroke-linejoin="miter"><path d="M832.5,138.2 H829 V146.7 H843 V138.2 H839.5"/><path d="M836,142.5 V134"/><path d="M833.3,136 L836,133.2 L838.7,136" stroke-width="1.8"/></g>
<path d="M854.5,133 H869.5 L863.5,139.5 V147.8 H861.1 V139.5 Z" fill="#b9b9b9"/><path d="M864.7,142.6 L869.7,147.6 M869.7,142.6 L864.7,147.6" stroke="#c4c4c4" stroke-width="1.5" fill="none"/>
<path d="M881,132.5 L885.6,132.5 L881,137.1 Z" fill="#555"/><path d="M882.5,134.0 L885.6,137.1" stroke="#555" stroke-width="2"/><path d="M895,132.5 L890.4,132.5 L895,137.1 Z" fill="#555"/><path d="M893.5,134.0 L890.4,137.1" stroke="#555" stroke-width="2"/><path d="M881,146.5 L885.6,146.5 L881,141.9 Z" fill="#555"/><path d="M882.5,145.0 L885.6,141.9" stroke="#555" stroke-width="2"/><path d="M895,146.5 L890.4,146.5 L895,141.9 Z" fill="#555"/><path d="M893.5,145.0 L890.4,141.9" stroke="#555" stroke-width="2"/>
<g fill="none" stroke="#555" stroke-width="2" stroke-linejoin="miter"><path d="M1461.5,138.2 H1458 V146.7 H1472 V138.2 H1468.5"/><path d="M1465,142.5 V134"/><path d="M1462.3,136 L1465,133.2 L1467.7,136" stroke-width="1.8"/></g>
<path d="M1484,133 H1499 L1493,139.5 V147.8 H1490.6 V139.5 Z" fill="#b9b9b9"/><path d="M1494.2,142.6 L1499.2,147.6 M1499.2,142.6 L1494.2,147.6" stroke="#c4c4c4" stroke-width="1.5" fill="none"/>
<path d="M1510,132.5 L1514.6,132.5 L1510,137.1 Z" fill="#555"/><path d="M1511.5,134.0 L1514.6,137.1" stroke="#555" stroke-width="2"/><path d="M1524,132.5 L1519.4,132.5 L1524,137.1 Z" fill="#555"/><path d="M1522.5,134.0 L1519.4,137.1" stroke="#555" stroke-width="2"/><path d="M1510,146.5 L1514.6,146.5 L1510,141.9 Z" fill="#555"/><path d="M1511.5,145.0 L1514.6,141.9" stroke="#555" stroke-width="2"/><path d="M1524,146.5 L1519.4,146.5 L1524,141.9 Z" fill="#555"/><path d="M1522.5,145.0 L1519.4,141.9" stroke="#555" stroke-width="2"/>
<g fill="none" stroke="#555" stroke-width="2" stroke-linejoin="miter"><path d="M832.5,476.2 H829 V484.7 H843 V476.2 H839.5"/><path d="M836,480.5 V472"/><path d="M833.3,474 L836,471.2 L838.7,474" stroke-width="1.8"/></g>
<path d="M854.5,471 H869.5 L863.5,477.5 V485.8 H861.1 V477.5 Z" fill="#b9b9b9"/><path d="M864.7,480.6 L869.7,485.6 M869.7,480.6 L864.7,485.6" stroke="#c4c4c4" stroke-width="1.5" fill="none"/>
<path d="M881,470.5 L885.6,470.5 L881,475.1 Z" fill="#555"/><path d="M882.5,472.0 L885.6,475.1" stroke="#555" stroke-width="2"/><path d="M895,470.5 L890.4,470.5 L895,475.1 Z" fill="#555"/><path d="M893.5,472.0 L890.4,475.1" stroke="#555" stroke-width="2"/><path d="M881,484.5 L885.6,484.5 L881,479.9 Z" fill="#555"/><path d="M882.5,483.0 L885.6,479.9" stroke="#555" stroke-width="2"/><path d="M895,484.5 L890.4,484.5 L895,479.9 Z" fill="#555"/><path d="M893.5,483.0 L890.4,479.9" stroke="#555" stroke-width="2"/>
<g fill="none" stroke="#555" stroke-width="2" stroke-linejoin="miter"><path d="M1461.5,476.2 H1458 V484.7 H1472 V476.2 H1468.5"/><path d="M1465,480.5 V472"/><path d="M1462.3,474 L1465,471.2 L1467.7,474" stroke-width="1.8"/></g>
<path d="M1484,471 H1499 L1493,477.5 V485.8 H1490.6 V477.5 Z" fill="#b9b9b9"/><path d="M1494.2,480.6 L1499.2,485.6 M1499.2,480.6 L1494.2,485.6" stroke="#c4c4c4" stroke-width="1.5" fill="none"/>
<path d="M1510,470.5 L1514.6,470.5 L1510,475.1 Z" fill="#555"/><path d="M1511.5,472.0 L1514.6,475.1" stroke="#555" stroke-width="2"/><path d="M1524,470.5 L1519.4,470.5 L1524,475.1 Z" fill="#555"/><path d="M1522.5,472.0 L1519.4,475.1" stroke="#555" stroke-width="2"/><path d="M1510,484.5 L1514.6,484.5 L1510,479.9 Z" fill="#555"/><path d="M1511.5,483.0 L1514.6,479.9" stroke="#555" stroke-width="2"/><path d="M1524,484.5 L1519.4,484.5 L1524,479.9 Z" fill="#555"/><path d="M1522.5,483.0 L1519.4,479.9" stroke="#555" stroke-width="2"/>
<path d="M162.5,273 H177.5 L171.5,279.5 V287.8 H169.1 V279.5 Z" fill="#555"/><path d="M172.7,282.6 L177.7,287.6 M177.7,282.6 L172.7,287.6" stroke="#d23c5a" stroke-width="1.5" fill="none"/>
<path d="M189,273.3 L193.6,273.3 L189,277.90000000000003 Z" fill="#555"/><path d="M190.5,274.8 L193.6,277.90000000000003" stroke="#555" stroke-width="2"/><path d="M203,273.3 L198.4,273.3 L203,277.90000000000003 Z" fill="#555"/><path d="M201.5,274.8 L198.4,277.90000000000003" stroke="#555" stroke-width="2"/><path d="M189,287.3 L193.6,287.3 L189,282.7 Z" fill="#555"/><path d="M190.5,285.8 L193.6,282.7" stroke="#555" stroke-width="2"/><path d="M203,287.3 L198.4,287.3 L203,282.7 Z" fill="#555"/><path d="M201.5,285.8 L198.4,282.7" stroke="#555" stroke-width="2"/>
<path d="M162.5,528 H177.5 L171.5,534.5 V542.8 H169.1 V534.5 Z" fill="#555"/><path d="M172.7,537.6 L177.7,542.6 M177.7,537.6 L172.7,542.6" stroke="#d23c5a" stroke-width="1.5" fill="none"/>
<path d="M189,528.3 L193.6,528.3 L189,532.9 Z" fill="#555"/><path d="M190.5,529.8 L193.6,532.9" stroke="#555" stroke-width="2"/><path d="M203,528.3 L198.4,528.3 L203,532.9 Z" fill="#555"/><path d="M201.5,529.8 L198.4,532.9" stroke="#555" stroke-width="2"/><path d="M189,542.3 L193.6,542.3 L189,537.6999999999999 Z" fill="#555"/><path d="M190.5,540.8 L193.6,537.6999999999999" stroke="#555" stroke-width="2"/><path d="M203,542.3 L198.4,542.3 L203,537.6999999999999 Z" fill="#555"/><path d="M201.5,540.8 L198.4,537.6999999999999" stroke="#555" stroke-width="2"/>
<rect x="58.5" y="296.5" width="13" height="13" fill="#fff" stroke="#b9b9b9"/><path d="M61.2,303.3 L63.8,306 L68.8,299.8" fill="none" stroke="#8a8a8a" stroke-width="1.3"/>
<rect x="58.5" y="316.5" width="13" height="13" fill="#fff" stroke="#b9b9b9"/><path d="M61.2,323.3 L63.8,326 L68.8,319.8" fill="none" stroke="#8a8a8a" stroke-width="1.3"/>
<rect x="58.5" y="336.5" width="13" height="13" fill="#fff" stroke="#b9b9b9"/><path d="M61.2,343.3 L63.8,346 L68.8,339.8" fill="none" stroke="#8a8a8a" stroke-width="1.3"/>
<rect x="58.5" y="356.5" width="13" height="13" fill="#fff" stroke="#b9b9b9"/><path d="M61.2,363.3 L63.8,366 L68.8,359.8" fill="none" stroke="#8a8a8a" stroke-width="1.3"/>
<rect x="58.5" y="376.5" width="13" height="13" fill="#fff" stroke="#b9b9b9"/><path d="M61.2,383.3 L63.8,386 L68.8,379.8" fill="none" stroke="#8a8a8a" stroke-width="1.3"/>
<rect x="58.5" y="396.5" width="13" height="13" fill="#fff" stroke="#b9b9b9"/><path d="M61.2,403.3 L63.8,406 L68.8,399.8" fill="none" stroke="#8a8a8a" stroke-width="1.3"/>
<rect x="58.5" y="416.5" width="13" height="13" fill="#fff" stroke="#b9b9b9"/><path d="M61.2,423.3 L63.8,426 L68.8,419.8" fill="none" stroke="#8a8a8a" stroke-width="1.3"/>
<rect x="58.5" y="551.5" width="13" height="13" fill="#fff" stroke="#b9b9b9"/><path d="M61.2,558.3 L63.8,561 L68.8,554.8" fill="none" stroke="#8a8a8a" stroke-width="1.3"/>
<rect x="58.5" y="571.5" width="13" height="13" fill="#fff" stroke="#b9b9b9"/><path d="M61.2,578.3 L63.8,581 L68.8,574.8" fill="none" stroke="#8a8a8a" stroke-width="1.3"/>
<rect x="58.5" y="591.5" width="13" height="13" fill="#fff" stroke="#b9b9b9"/><path d="M61.2,598.3 L63.8,601 L68.8,594.8" fill="none" stroke="#8a8a8a" stroke-width="1.3"/>
<g fill="none" stroke="#505050" stroke-width="2" stroke-linejoin="miter"><path d="M1512.5,104.2 H1509 V112.7 H1523 V104.2 H1519.5"/><path d="M1516,108.5 V100"/><path d="M1513.3,102 L1516,99.2 L1518.7,102" stroke-width="1.8"/></g>
<!-- title bar icons -->
<g id="tb">
<circle cx="18.5" cy="16" r="6" fill="#1c2c4a"/><rect x="14" y="14.5" width="9" height="3" rx="1" fill="#cfe6d0"/><rect x="19" y="14.8" width="3.5" height="2.4" fill="#5a9a4a"/>
<rect x="35" y="5" width="1.3" height="22" fill="#b9c9e6"/>
<path d="M55.5,22.5 A6.3,6.3 0 1 0 46,12.5" fill="none" stroke="#b7c8e8" stroke-width="1.6"/>
<path d="M45.3,8.6 V14.2 H51" fill="none" stroke="#b7c8e8" stroke-width="1.6"/>
<path d="M73,22.5 A6.3,6.3 0 1 1 82.5,12.5" fill="none" stroke="#b7c8e8" stroke-width="1.6"/>
<path d="M83.2,8.6 V14.2 H77.5" fill="none" stroke="#b7c8e8" stroke-width="1.6"/>
<rect x="12.7" y="40.7" width="14.6" height="11.6" rx="1.5" fill="none" stroke="#dbe6f8" stroke-width="1.5"/>
<path d="M18.5,41 V52" stroke="#dbe6f8" stroke-width="1.4"/>
<path d="M21,44 H25 M21,46.5 H25 M21,49 H25" stroke="#dbe6f8" stroke-width="1.1"/>
<path d="M30,45 H37.4 L33.7,49.6 Z" fill="#b9c9e8"/>
<path d="M1411.5,16.6 H1422.5" stroke="#dfe8f8" stroke-width="1.3"/>
<rect x="1460.3" y="13.3" width="7.5" height="7.5" fill="none" stroke="#dfe8f8" stroke-width="1.1"/>
<path d="M1462.6,13 V11.2 H1470 V18.6 H1468.2" fill="none" stroke="#dfe8f8" stroke-width="1.1"/>
<path d="M1508.2,11.2 L1518,21.4 M1518,11.2 L1508.2,21.4" stroke="#dfe8f8" stroke-width="1.3"/>
<path d="M1473.6,43 L1478,47.2 L1482.4,43" fill="none" stroke="#dfe8f8" stroke-width="1.7"/>
<circle cx="1498.8" cy="44.9" r="7" fill="#fff"/><rect x="1498" y="44" width="1.8" height="5" fill="#555"/><circle cx="1498.9" cy="41.6" r="1.1" fill="#555"/>
<circle cx="1522.9" cy="44.9" r="7" fill="#fff"/>
<text x="1522.9" y="49.3" text-anchor="middle" font-size="12" font-weight="bold" fill="#5d6f8d">?</text>
</g>
<!-- breadcrumb icons -->
<path d="M8,72 L15.2,65.2 L22.4,72 M10.2,71 V78 H20.2 V71" fill="none" stroke="#c3cfd3" stroke-width="1.5"/>
<path d="M43,67 L51,71.8 L43,76.6 Z" fill="#f5f8f9"/>
<!-- heading filter -->
<path d="M169.5,95.5 H180.5 L176,100.8 V106.6 L174,105.2 V100.8 Z" fill="#4f86c8"/>
<!-- side arrow -->
<path d="M13.7,775.5 L19,785.5 H8.4 Z" fill="#111"/>
<!-- toolbar -->
<g id="toolbar">
<rect x="1374" y="96" width="22" height="19.5" fill="#e8f1fb"/>
<path d="M1374.5,115.5 V96.5 H1396" fill="none" stroke="#a2a2a2" stroke-width="1"/>
<path d="M1396,97 V115.5 H1375" fill="none" stroke="#dfe3e8" stroke-width="1"/>
<path d="M1378.3,104.2 C1379.6,100.4 1385,98.6 1389.2,102" fill="none" stroke="#34567f" stroke-width="2.3"/>
<path d="M1391.6,97.9 V104.4 L1385.4,103.6 Z" fill="#34567f"/>
<path d="M1390,107.8 C1388.7,111.6 1383.3,113.4 1379.1,110" fill="none" stroke="#34567f" stroke-width="2.3"/>
<path d="M1376.7,114.1 V107.6 L1382.9,108.4 Z" fill="#34567f"/>
<g fill="#8c8c8c">
<rect x="1403.9" y="99" width="3.7" height="3.7"/><rect x="1408.9" y="99" width="3.7" height="3.7"/><rect x="1413.9" y="99" width="3.7" height="3.7"/>
<rect x="1403.9" y="104.2" width="3.7" height="3.7"/><rect x="1408.9" y="104.2" width="3.7" height="3.7"/><rect x="1413.9" y="104.2" width="3.7" height="2"/>
<rect x="1403.9" y="109.4" width="3.7" height="3.7"/><rect x="1408.9" y="109.4" width="2.4" height="3.7"/>
</g>
<path d="M1418.6,108.6 A3.3,3.3 0 1 1 1413.4,106.6" fill="none" stroke="#8c8c8c" stroke-width="1.7"/>
<rect x="1430" y="99" width="14" height="13.6" fill="#fbe9fc" stroke="#a685ac" stroke-width="2"/>
<path d="M1430,104.3 H1444" stroke="#a685ac" stroke-width="1.6"/>
<rect x="1438.6" y="100.5" width="1.5" height="2.2" fill="#8d6e95"/>
<path d="M1433.3,108.7 H1439.8 M1433.3,110.6 H1439.8" stroke="#a685ac" stroke-width="1.1"/>
<rect x="1456" y="99" width="13.3" height="12.8" fill="#fbe9fc" stroke="#a685ac" stroke-width="2"/>
<path d="M1456,104.3 H1469" stroke="#a685ac" stroke-width="1.6"/>
<rect x="1463.6" y="100.5" width="1.5" height="2.2" fill="#8d6e95"/>
<rect x="1461.8" y="104.9" width="10" height="9.6" fill="#eef4f3"/>
<path d="M1466.7,105.4 V113.8 M1462.4,109.5 H1471" stroke="#4a9e92" stroke-width="2.6"/>
<path d="M1493,97.4 L1497.2,101.6 L1485.6,113 L1480.8,113.9 L1481.6,109 Z" fill="#505050"/>
<path d="M1482.6,110.2 L1484.6,112.2" stroke="#e8e8e8" stroke-width="1"/>
<path d="M1489.6,100.3 L1494.2,104.9" stroke="#ececec" stroke-width="0.9"/>
</g>
<!-- taskbar hints -->
<rect x="737" y="834" width="35" height="8" fill="#474e60"/>
<path d="M14,842 V840.6 L26,839.6 V842 Z" fill="#e6e8ec"/>
<path d="M52.5,842 A4.5,4.5 0 0 1 61.5,842" fill="none" stroke="#dfe2e8" stroke-width="1.2"/>
<rect x="83" y="839.6" width="1" height="2.4" fill="#cfd3da"/><rect x="91" y="839.6" width="1.2" height="2.4" fill="#cfd3da"/><rect x="96" y="839.6" width="1.2" height="2.4" fill="#cfd3da"/>
<rect x="162" y="841" width="5" height="1" fill="#8890a0"/>
<rect x="206" y="840.6" width="3" height="1.4" fill="#d08a50"/>
<rect x="272" y="840.4" width="5" height="1.6" fill="#c0504a"/>
<rect x="306" y="840.2" width="12" height="1.8" fill="#9aa0ac"/>
<rect x="343" y="840.8" width="12" height="1.2" fill="#3f6fa8"/>
<rect x="382" y="840.4" width="13" height="1.6" fill="#3f9a86"/>
<rect x="459" y="840.8" width="4" height="1.2" fill="#5f7fc0"/>
<rect x="493" y="840.2" width="11" height="1.8" fill="#a070c0"/>
<rect x="526" y="840" width="10" height="2" fill="#e8eaf0"/>
<rect x="566" y="840.6" width="12" height="1.4" fill="#3f8fb0"/>
<rect x="601" y="840.6" width="9" height="1.4" fill="#3f9aa0"/>
<rect x="642" y="841" width="4" height="1" fill="#d09080"/>
<rect x="677" y="841" width="9" height="1" fill="#806a70"/>
<rect x="711" y="840.2" width="14" height="1.8" fill="#d0503a"/>
<rect x="750" y="840.8" width="6" height="1.2" fill="#9aa39a"/>
<rect x="822" y="840.6" width="11" height="1.4" fill="#a03040"/>
<rect x="857" y="840.4" width="15" height="1.6" fill="#4fa0c0"/>
<path d="M1270,842 L1276,840.4 M1279,840.4 L1282,842" stroke="#c8ccd4" stroke-width="1"/>
<path d="M1303,842 L1316,839.8 V842 Z" fill="#d8dbe0"/>
<rect x="1495" y="839.8" width="16" height="2.2" fill="#f0f2f5"/>
<rect x="1531" y="833" width="1" height="9" fill="#7f8594"/>
<!-- status icons -->
<circle cx="12.8" cy="820.6" r="6.6" fill="#eaf2fa" stroke="#4f7fb3" stroke-width="1.3"/>
<ellipse cx="12.8" cy="820.6" rx="3" ry="6.6" fill="none" stroke="#4f7fb3" stroke-width="1"/>
<path d="M6.2,820.6 H19.4 M7.6,817 H18 M7.6,824.2 H18" stroke="#4f7fb3" stroke-width="0.9"/>
<circle cx="122.8" cy="816.6" r="3.7" fill="#5a9e8a"/>
<path d="M115.4,828.6 C115.4,822 118.5,820.6 122.8,820.6 C127.1,820.6 130.2,822 130.2,828.6 Z" fill="#5a9e8a"/>
<path d="M1517.4,814.6 L1520.9,828.6" stroke="#6e8a86" stroke-width="1.3"/>
<path d="M1517.2,814.3 L1528.2,815.8 L1519,821.8 Z" fill="#69a896"/>
</svg>

<!-- rows -->
<div class="abs row" style="left:78.5px;top:297px;">(All)</div>
<div class="abs row" style="left:78.5px;top:317px;">1. Enero</div>
<div class="abs row" style="left:78.5px;top:337px;">2. Febrero</div>
<div class="abs row" style="left:78.5px;top:357px;">3. Marzo</div>
<div class="abs row" style="left:78.5px;top:377px;">4. Abril</div>
<div class="abs row" style="left:78.5px;top:397px;">5. Mayo</div>
<div class="abs row" style="left:78.5px;top:417px;">6. Junio</div>
<div class="abs row" style="left:78.5px;top:552px;">(All)</div>
<div class="abs row" style="left:78.5px;top:572px;">Real</div>
<div class="abs row" style="left:78.5px;top:592px;">Presupuestado</div>


<div class="abs st" style="left:25px;top:815px;">Idioma: Español</div>
<div class="abs" style="left:108px;top:809px;width:1px;height:22px;background:#bdbdbd;"></div>
<div class="abs st" style="left:135px;top:815px;">Mi Cuenta: myabcm</div>
</div>
</body></html>
